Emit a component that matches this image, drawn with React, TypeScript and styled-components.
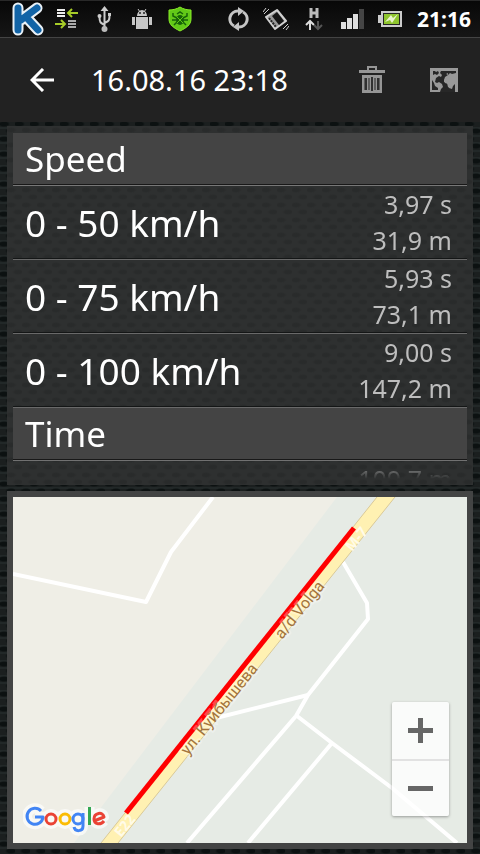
import React from "react";
import styled, { createGlobalStyle } from "styled-components";

const GlobalStyle = createGlobalStyle`
  * { box-sizing: border-box; }
  html, body, #root { height: 100%; }
  body { margin: 0; background: #101515; font-family: "Noto Sans", "Open Sans", sans-serif; color: #fff; }
  button { font: inherit; color: inherit; border: 0; padding: 0; background: none; cursor: pointer; }
`;

const Screen = styled.div`
  display: flex;
  flex-direction: column;
  min-height: 100%;
  background-color: #1b1f1f;
  background-image:
    radial-gradient(ellipse 6px 3px at 4px 4px, #0c1111 60%, transparent 100%),
    radial-gradient(ellipse 6px 3px at 11px 11px, #0c1111 60%, transparent 100%),
    linear-gradient(#222828 0 2px, transparent 2px 7px, #222828 7px 9px, transparent 9px);
  background-size: 15px 15px;
`;

const StatusBar = styled.header`
  display: flex;
  align-items: center;
  justify-content: space-between;
  height: 38px;
  padding: 0 9px;
  background: linear-gradient(#080808, #161616);
  border-top: 1px solid #292929;
  border-bottom: 1px solid #444;
`;

const StatusGroup = styled.div`
  display: flex;
  align-items: center;
`;

const StatusSlot = styled.span`
  display: grid;
  place-items: center;
  width: 38px;
  height: 36px;
`;

const Clock = styled.time`
  margin-left: 8px;
  font-size: 21px;
  line-height: 28px;
  font-weight: 700;
`;

const Toolbar = styled.nav`
  display: flex;
  align-items: center;
  height: 84px;
  padding: 0 18px 0 24px;
  background: #222;
`;

const IconButton = styled.button`
  display: grid;
  place-items: center;
  width: 36px;
  height: 48px;
`;

const Title = styled.h1`
  flex: 1;
  margin: 0 0 0 31px;
  font-size: 29px;
  line-height: 40px;
  font-weight: 400;
  white-space: nowrap;
`;

const Actions = styled.div`
  display: flex;
  gap: 36px;
`;

const Content = styled.main`
  display: flex;
  flex: 1;
  flex-direction: column;
  gap: 6px;
  padding: 4px 7px 5px;
`;

const ResultsPanel = styled.section`
  height: 359px;
  padding: 7px 6px 6px;
  background-color: #2e3030;
  background-image:
    radial-gradient(ellipse 6px 3px at 4px 4px, #292b2b 50%, transparent 100%),
    radial-gradient(ellipse 6px 3px at 11px 11px, #292b2b 50%, transparent 100%);
  background-size: 15px 15px;
`;

const Results = styled.div`
  height: 100%;
  overflow: hidden;
  mask-image: linear-gradient(#000 calc(100% - 20px), transparent);
`;

const GroupTitle = styled.h2`
  margin: 0;
  height: 53px;
  padding: 0 12px;
  font-size: 35px;
  line-height: 52px;
  font-weight: 400;
  background: #444;
  border-bottom: 1px solid #777;
  box-shadow: inset 0 -1px #181818;
`;

const Row = styled.div`
  display: flex;
  align-items: center;
  justify-content: space-between;
  height: 74px;
  padding: 0 15px 0 12px;
  border-bottom: 1px solid #696969;
  box-shadow: inset 0 -1px #141616;
`;

const RangeLabel = styled.span`
  font-size: 37px;
  line-height: 48px;
`;

const Values = styled.div`
  display: flex;
  flex-direction: column;
  min-height: 74px;
  margin-left: auto;
  text-align: right;
  font-size: 25px;
  line-height: 36px;
  color: #bebebe;
`;

const MapPanel = styled.section`
  display: flex;
  flex: 1;
  padding: 6px;
  background: #434444;
`;

const MapArea = styled.div`
  position: relative;
  flex: 1;
  overflow: hidden;
  background: #e6ebe5;
`;

const MapDrawing = styled.svg`
  position: absolute;
  inset: 0;
  width: 100%;
  height: 100%;
`;

const Logo = styled.span`
  position: absolute;
  left: 10px;
  bottom: 7px;
  svg { display: block; }
`;

const ZoomControls = styled.div`
  position: absolute;
  right: 18px;
  bottom: 27px;
  display: flex;
  flex-direction: column;
  width: 57px;
  border-radius: 2px;
  background: rgba(255, 255, 255, 0.8);
  box-shadow: 0 1px 3px rgba(0, 0, 0, 0.35);
`;

const ZoomButton = styled.button`
  display: grid;
  place-items: center;
  height: 57px;
  & + & { border-top: 2px solid #e2e2e2; }
`;

const LetterIcon = () => (
  <svg width="32" height="34" viewBox="0 0 32 34" fill="none" strokeLinecap="round" strokeLinejoin="round">
    <path d="M6 6v22M25 6L9 18M14 15l12 13" stroke="#e9f1f7" strokeWidth="11" />
    <path d="M6 6v22M25 6L9 18M14 15l12 13" stroke="#1264a7" strokeWidth="7" />
  </svg>
);

const TransferIcon = () => (
  <svg width="23" height="22" viewBox="0 0 23 22" fill="none">
    <path d="M2 2h8M2 5h8M2 8h8" stroke="#eee" strokeWidth="2" />
    <path d="M13 13h8M13 16h8M13 19h8" stroke="#aaa" strokeWidth="2" />
    <path d="M23 5H13M17 1l-4 4 4 4M0 16h10M6 12l4 4-4 4" stroke="#a7cc28" strokeWidth="2" />
  </svg>
);

const UsbIcon = () => (
  <svg width="15" height="26" viewBox="0 0 15 26" fill="none" stroke="#ccc" strokeWidth="2">
    <path d="M7.500 3v20M7.500 19C4 17 2.500 17 2.500 11M7.500 17c4-2 5-2 5-7" />
    <path d="M7.500 0l4 5h-8zM11 7h3v3h-3z" fill="#ccc" stroke="none" />
    <circle cx="2.500" cy="10" r="2" fill="#ccc" stroke="none" />
    <circle cx="7.500" cy="23" r="3" fill="#bbb" stroke="none" />
  </svg>
);

const RobotIcon = () => (
  <svg width="20" height="22" viewBox="0 0 20 22" fill="#c6c6c6">
    <path d="M5 8a5 6 0 0 1 10 0zM4 9h12v12H4zM0 9h3v8H0zM17 9h3v8h-3z" />
    <path d="M6 1l2 3M14 1l-2 3" stroke="#c6c6c6" />
    <circle cx="8" cy="5" r="1" fill="#222" /><circle cx="12" cy="5" r="1" fill="#222" />
  </svg>
);

const ShieldIcon = () => (
  <svg width="24" height="26" viewBox="0 0 24 26" fill="none">
    <path d="M12 1c3 2 7 3 11 3v9c0 6-5 9-11 12C6 22 1 19 1 13V4c4 0 8-1 11-3z" fill="#62c918" stroke="#88ed27" />
    <ellipse cx="12" cy="14" rx="4" ry="5" fill="#176308" />
    <path d="M9 8l3-2 3 2M9 12L5 10V7M15 12l4-2V7M8 14H4M16 14h4M9 16l-3 3M15 16l3 3" stroke="#176308" strokeWidth="1.500" />
    <path d="M9 11l6 6M15 11l-6 6" stroke="#62c918" />
  </svg>
);

const SyncIcon = () => (
  <svg width="21" height="24" viewBox="0 0 21 24" fill="none" stroke="#c5c5c5" strokeWidth="3">
    <path d="M6 19A8 8 0 0 1 10 4M15 5a8 8 0 0 1-4 15" />
    <path d="M10 0l6 4-6 5zM11 15l-6 5 6 4z" fill="#c5c5c5" stroke="none" />
  </svg>
);

const VibrateIcon = () => (
  <svg width="26" height="22" viewBox="0 0 26 22" fill="none" stroke="#d0d0d0">
    <path d="M3 9L14 2l9 11-11 8z" strokeWidth="2" strokeLinejoin="round" fill="#999" />
    <path d="M9 8l5-4 7 9-5 4z" fill="#151515" stroke="none" />
    <path d="M6 10l7 9" stroke="#222" strokeWidth="2" strokeDasharray="2 1" />
    <path d="M1 6l5-5M0 4l3-4M20 21l5-5M23 22l3-4" />
  </svg>
);

const DataIcon = () => (
  <svg width="18" height="24" viewBox="0 0 18 24" fill="none" strokeWidth="2">
    <path d="M6 1v10M12 1v10M6 6h6" stroke="#bbb" strokeWidth="3" />
    <path d="M5 23v-8M1 18l4-4 4 4" stroke="#ddd" />
    <path d="M13 14v8M9 18l4 4 4-4" stroke="#555" />
  </svg>
);

const SignalIcon = () => (
  <svg width="23" height="20" viewBox="0 0 23 20" fill="#dedede">
    <path d="M0 13h5v7H0zM6 9h5v11H6zM12 5h5v15h-5z" /><path d="M18 0h5v20h-5z" fill="#454545" />
  </svg>
);

const BatteryIcon = () => (
  <svg width="24" height="16" viewBox="0 0 24 16">
    <path d="M3 0h21v16H3v-4H0V4h3z" fill="#ccc" />
    <path d="M5 2h17v12H5z" fill="#242424" /><path d="M6 3h15v10H6z" fill="#8ec52d" />
    <path d="M7 11l6-7 2 3 5-4-6 9-2-3z" fill="#e9f4ce" />
  </svg>
);

const BackIcon = () => (
  <svg width="24" height="24" viewBox="0 0 24 24" fill="none" stroke="#fff" strokeWidth="3">
    <path d="M24 12H2M13 1L2 12l11 11" />
  </svg>
);

const TrashIcon = () => (
  <svg width="26" height="28" viewBox="0 0 26 28" fill="none" stroke="#969696">
    <path d="M0 5.500h26" strokeWidth="3" /><path d="M9 4V1h8v3" strokeWidth="2" />
    <path d="M3 9h20v18H3z" fill="#969696" stroke="none" />
    <path d="M6 12v12M20 12v12M10 12v12M16 12v12" stroke="#242424" />
    <path d="M7 12v12M19 12v12M13 11v14" stroke="#303030" strokeWidth="2" />
  </svg>
);

const WorldIcon = () => (
  <svg width="28" height="24" viewBox="0 0 28 24">
    <path d="M0 0h28v24H0z" fill="#999" />
    <path d="M3 3h2l1 1 2-1 1 2-2 2-2-1-2 1zM11 3h15v2l-4 1-2-1-2 2-3 2-1 3 1 3 3 1 1 4 3 1 1-3 2-2v8H10l1-3 2-2-1-3-3-2-2 1-2-1 1-4 3-2 2 1 1-2-2-2zM2 12l2 3 1 3 3 2v2H2z" fill="#272727" />
    <path d="M14 12l3-2 4 1 2 3-2 2-1 4-2-1-1-4-3-1zM22 6l2 1-1 2zM16 6l2-1v2z" fill="#999" />
  </svg>
);

const BrandLogo = () => (
  <svg width="86" height="36" viewBox="0 0 86 36" role="img" aria-label="Google">
    {["#fff", ""].map((halo, i) => (
      <g key={i} fill="none" strokeWidth={halo ? 10 : 3} strokeLinejoin="round" opacity={halo ? 0.65 : 1}>
        <path d="M18 11A8 8 0 1 0 20 17H12" stroke={halo || "#4285f4"} />
        <circle cx="28" cy="19" r="5" stroke={halo || "#ea4335"} />
        <circle cx="42" cy="19" r="5" stroke={halo || "#fbbc05"} />
        <path d="M60 13v13c0 6-8 6-9 1" stroke={halo || "#4285f4"} />
        <circle cx="55" cy="19" r="5" stroke={halo || "#4285f4"} />
        <path d="M66.500 7v18" stroke={halo || "#34a853"} />
        <path d="M71 21l10-4c-1-6-10-4-10 2 0 6 7 6 10 2" stroke={halo || "#ea4335"} />
      </g>
    ))}
  </svg>
);

const Route = () => (
  <MapDrawing viewBox="0 0 454 346" preserveAspectRatio="xMidYMid slice">
    <path d="M0 0h324L61 346H0z" fill="#efeee6" />
    <g fill="none" stroke="#fff" strokeWidth="4" strokeLinejoin="round">
      <path d="M200 0l-42 55-25 50-133-28" />
      <path d="M330 65l24 41 1 16-60 76-12 21-109 127" />
      <path d="M295 198l-96 24M284 219l35 27 60 45 65 55M319 246l-84 100" />
    </g>
    <path d="M364 0L88 346h17L382 0z" fill="#fff1b2" />
    <path d="M364 0L88 346M382 0L105 346" stroke="#d9c998" />
    <path d="M341 31L113 316" stroke="#f00" strokeWidth="5" />
    <g fill="#a3743c" stroke="#fff" strokeOpacity="0.3" strokeWidth="4" paintOrder="stroke" fontFamily="Roboto, sans-serif" fontSize="16">
      <text transform="translate(269 143) rotate(-51)">a/d Volga</text>
      <text transform="translate(175 259) rotate(-51)">ул. Куйбышева</text>
    </g>
    <g fill="#fffbe8" fontFamily="Noto Sans, sans-serif" fontSize="14" fontWeight="700">
      <text transform="translate(108 341) rotate(-51)">E22</text>
      <text transform="translate(339 55) rotate(-51)">M-7</text>
    </g>
  </MapDrawing>
);

const notifications = [LetterIcon, TransferIcon, UsbIcon, RobotIcon, ShieldIcon];
const indicators = [SyncIcon, VibrateIcon, DataIcon, SignalIcon, BatteryIcon];

const speeds = [
  { range: "0 - 50 km/h", time: "3,97 s", distance: "31,9 m" },
  { range: "0 - 75 km/h", time: "5,93 s", distance: "73,1 m" },
  { range: "0 - 100 km/h", time: "9,00 s", distance: "147,2 m" },
];

export default function App() {
  return (
    <Screen>
      <GlobalStyle />
      <StatusBar>
        <StatusGroup>
          {notifications.map((Icon, i) => <StatusSlot key={i}><Icon /></StatusSlot>)}
        </StatusGroup>
        <StatusGroup>
          {indicators.map((Icon, i) => <StatusSlot key={i}><Icon /></StatusSlot>)}
          <Clock>21:16</Clock>
        </StatusGroup>
      </StatusBar>
      <Toolbar>
        <IconButton aria-label="Back"><BackIcon /></IconButton>
        <Title>16.08.16 23:18</Title>
        <Actions>
          <IconButton aria-label="Delete"><TrashIcon /></IconButton>
          <IconButton aria-label="Map"><WorldIcon /></IconButton>
        </Actions>
      </Toolbar>
      <Content>
        <ResultsPanel>
          <Results>
            <GroupTitle>Speed</GroupTitle>
            {speeds.map((s) => (
              <Row key={s.range}>
                <RangeLabel>{s.range}</RangeLabel>
                <Values><span>{s.time}</span><span>{s.distance}</span></Values>
              </Row>
            ))}
            <GroupTitle>Time</GroupTitle>
            <Row>
              <Values><span>109,7 m</span></Values>
            </Row>
          </Results>
        </ResultsPanel>
        <MapPanel>
          <MapArea>
            <Route />
            <Logo><BrandLogo /></Logo>
            <ZoomControls>
              <ZoomButton aria-label="Zoom in">
                <svg width="25" height="25" viewBox="0 0 25 25"><path d="M10 0h5v10h10v5H15v10h-5V15H0v-5h10z" fill="#666" /></svg>
              </ZoomButton>
              <ZoomButton aria-label="Zoom out">
                <svg width="25" height="5" viewBox="0 0 25 5"><path d="M0 0h25v5H0z" fill="#666" /></svg>
              </ZoomButton>
            </ZoomControls>
          </MapArea>
        </MapPanel>
      </Content>
    </Screen>
  );
}
